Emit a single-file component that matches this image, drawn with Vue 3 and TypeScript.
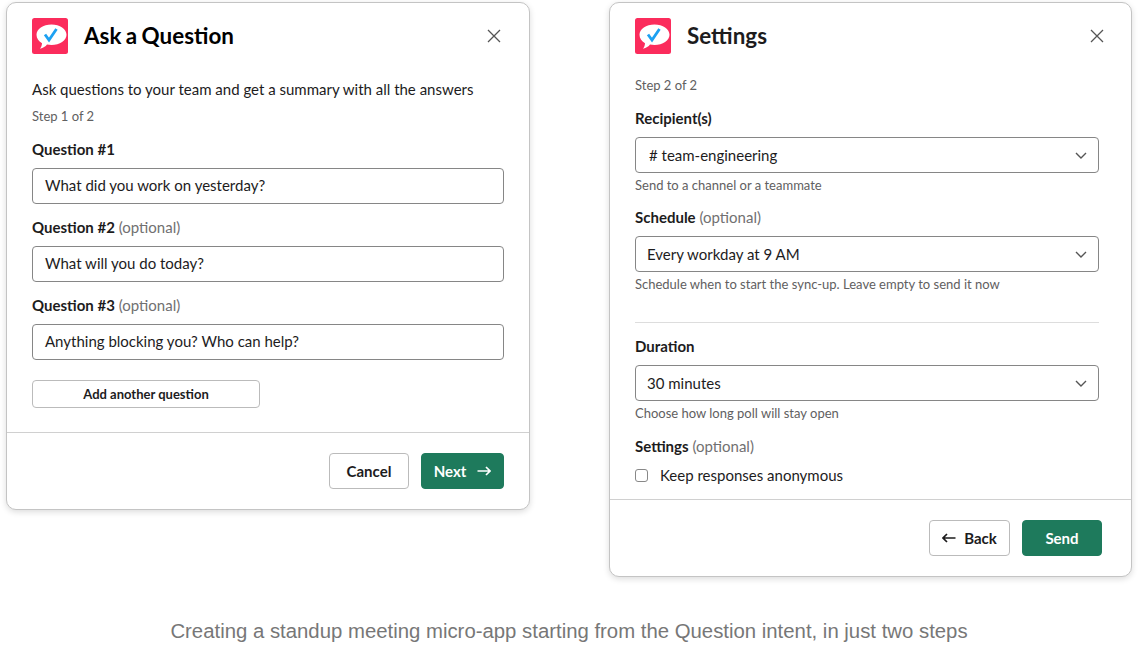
<script setup lang="ts">
const questions = [
  { label: 'Question #1', optional: false, value: 'What did you work on yesterday?' },
  { label: 'Question #2', optional: true, value: 'What will you do today?' },
  { label: 'Question #3', optional: true, value: 'Anything blocking you? Who can help?' },
]
</script>

<template>
  <div class="page">
    <div class="modals">
      <section class="modal">
        <header class="head left-head">
          <svg class="logo" viewBox="0 0 36 36">
            <rect width="36" height="36" rx="2.5" fill="#fb2c5c" />
            <path d="M19.5 6.500c8.300 0 15 4.600 15 10.300s-6.700 10.300-15 10.300c-1.600 0-3.100-.2-4.500-.5-1.500 2-3.800 3.500-7 4.200 1.200-1.500 1.900-3.300 2-5.500-3.500-1.900-5.500-5-5.500-8.500 0-5.700 6.700-10.300 15-10.300z" fill="#fff" />
            <path d="M13 16.500l4 5.500 7.500-11" fill="none" stroke="#1da1f2" stroke-width="2.800" />
          </svg>
          <h2 class="title ask-title">Ask a Question</h2>
          <svg class="close" viewBox="0 0 14 14"><path d="M1 1l12 12M13 1L1 13" /></svg>
        </header>
        <div class="body left-body">
          <p class="intro">Ask questions to your team and get a summary with all the answers</p>
          <p class="step">Step 1 of 2</p>
          <div v-for="q in questions" :key="q.label" class="field">
            <div class="label"><b>{{ q.label }}</b><span v-if="q.optional" class="opt"> (optional)</span></div>
            <div class="input">{{ q.value }}</div>
          </div>
          <button class="add">Add another question</button>
        </div>
        <footer class="foot">
          <button class="btn">Cancel</button>
          <button class="btn primary">Next
            <svg class="arrow" viewBox="0 0 14 12"><path d="M0.500 6H13M9 2l4 4-4 4" /></svg>
          </button>
        </footer>
      </section>

      <section class="modal right-modal">
        <header class="head">
          <svg class="logo" viewBox="0 0 36 36">
            <rect width="36" height="36" rx="2.500" fill="#fb2c5c" />
            <path d="M19.5 6.500c8.300 0 15 4.600 15 10.300s-6.700 10.300-15 10.300c-1.600 0-3.100-.2-4.500-.5-1.500 2-3.800 3.500-7 4.200 1.200-1.500 1.900-3.300 2-5.500-3.500-1.900-5.500-5-5.500-8.500 0-5.700 6.700-10.300 15-10.300z" fill="#fff" />
            <path d="M13 16.500l4 5.500 7.500-11" fill="none" stroke="#1da1f2" stroke-width="2.800" />
          </svg>
          <h2 class="title settings-title">Settings</h2>
          <svg class="close" viewBox="0 0 14 14"><path d="M1 1l12 12M13 1L1 13" /></svg>
        </header>
        <div class="body right-body">
          <p class="step first">Step 2 of 2</p>
          <div class="label l1"><b>Recipient(s)</b></div>
          <div class="input select"><span class="shift"># team-engineering</span><svg class="chev" viewBox="0 0 12 7"><path d="M1 1l5 5 5-5" /></svg></div>
          <p class="hint">Send to a channel or a teammate</p>
          <div class="label l2"><b>Schedule</b><span class="opt"> (optional)</span></div>
          <div class="input select">Every workday at 9 AM<svg class="chev" viewBox="0 0 12 7"><path d="M1 1l5 5 5-5" /></svg></div>
          <p class="hint">Schedule when to start the sync-up. Leave empty to send it now</p>
          <hr class="rule" />
          <div class="label l3"><b>Duration</b></div>
          <div class="input select">30 minutes<svg class="chev" viewBox="0 0 12 7"><path d="M1 1l5 5 5-5" /></svg></div>
          <p class="hint">Choose how long poll will stay open</p>
          <div class="label l4"><b>Settings</b><span class="opt"> (optional)</span></div>
          <label class="check"><span class="box"></span>Keep responses anonymous</label>
        </div>
        <footer class="foot right-foot">
          <button class="btn back">
            <svg class="arrow" viewBox="0 0 14 12"><path d="M13.500 6H1M5 2L1 6l4 4" /></svg>Back
          </button>
          <button class="btn primary send">Send</button>
        </footer>
      </section>
    </div>
    <p class="caption">Creating a standup meeting micro-app starting from the Question intent, in just two steps</p>
  </div>
</template>

<style>
html, body { margin: 0; background: #fff; }
</style>

<style scoped>
.page {
  width: 1138px;
  height: 647px;
  overflow: hidden;
  padding-top: 2px;
  box-sizing: border-box;
  font-family: Lato, "Open Sans", sans-serif;
  color: #1d1c1d;
  background: #fff;
}
.modals { display: flex; align-items: flex-start; gap: 79px; height: 617px; padding-left: 6px; }
.modal {
  width: 524px;
  box-sizing: border-box;
  border: 1px solid #c4c4c4;
  border-radius: 10px;
  background: #fff;
  box-shadow: 0 2px 6px rgba(0, 0, 0, .14);
}
.right-modal { width: 523px; }
.head { display: flex; align-items: center; padding: 15px 26px 0 25px; height: 36px; }
.left-head { padding-right: 27px; }
.logo { width: 36px; height: 36px; flex: none; }
.title { margin: 0 0 0 16px; font-size: 22.400px; line-height: 36px; font-weight: 700; color: #000; flex: 1; }
.ask-title { word-spacing: -1px; }
.settings-title { color: #1d1c1d; }
.close { width: 14px; height: 14px; fill: none; stroke: #555; stroke-width: 1.300; margin-right: 1px; }
.body { padding: 0 25px; }
.left-body { padding-top: 24px; height: 378px; box-sizing: border-box; }
.intro { margin: 0; font-size: 15px; line-height: 22px; }
.step { margin: 6px 0 0; font-size: 13px; line-height: 20px; color: #616061; }
.step.first { margin-top: 0; }
.field { margin-top: 12px; }
.label { font-size: 15px; line-height: 22px; }
.label b { font-weight: 700; }
.opt { color: #717071; font-size: 15px; }
.input {
  height: 36px;
  box-sizing: border-box;
  border: 1px solid #868686;
  border-radius: 4px;
  margin-top: 8px;
  padding: 0 12px;
  font-size: 15px;
  line-height: 32px;
  color: #1d1c1d;
}
.select { display: flex; align-items: center; justify-content: space-between; padding: 0 11px; line-height: 34px; }
.shift { margin-left: 2px; }
.chev { width: 12px; height: 7px; fill: none; stroke: #555; stroke-width: 1.400; }
.add {
  display: block;
  margin-top: 20px;
  width: 228px;
  height: 28px;
  box-sizing: border-box;
  border: 1px solid #bbb;
  border-radius: 4px;
  background: #fff;
  font: 700 13px/26px Lato, sans-serif;
  color: #1d1c1d;
  padding: 0;
}
.foot {
  display: flex;
  justify-content: flex-end;
  gap: 12px;
  border-top: 1px solid #d0d0d0;
  padding: 20px 25px 20px 0;
  height: 36px;
}
.right-foot { padding-right: 29px; }
.btn {
  height: 36px;
  width: 80px;
  box-sizing: border-box;
  border: 1px solid #bbb;
  border-radius: 4px;
  background: #fff;
  font: 700 15px/34px Lato, sans-serif;
  color: #1d1c1d;
  padding: 0;
  display: flex;
  align-items: center;
  justify-content: center;
}
.primary { background: #1e7a5c; border-color: #1e7a5c; color: #fff; width: 83px; }
.send { width: 80px; }
.back { width: 81px; }
.arrow { width: 14px; height: 12px; fill: none; stroke: currentColor; stroke-width: 1.700; }
.primary .arrow { margin-left: 11px; }
.back .arrow { margin-right: 8px; }
.right-body { height: 445px; box-sizing: border-box; padding: 21px 0 0 25px; }
.l1 { margin-top: 12px; }
.l2 { margin-top: 11px; }
.l3 { margin-top: 12px; }
.l4 { margin-top: 12px; }
.right-body .input { width: 464px; }
.hint { margin: 2px 0 0; font-size: 13px; line-height: 20px; color: #616061; }
.rule { margin: 28px 0 0; border: 0; border-top: 1px solid #ddd; width: 464px; }
.check { display: flex; align-items: center; font-size: 15px; line-height: 22px; margin-top: 7px; }
.box { width: 13px; height: 13px; box-sizing: border-box; border: 1px solid #888; border-radius: 3px; margin-right: 12px; }
.caption {
  margin: 0;
  text-align: center;
  font-size: 20.350px;
  line-height: 24px;
  color: #777;
  font-family: "Liberation Sans", sans-serif;
}
</style>
